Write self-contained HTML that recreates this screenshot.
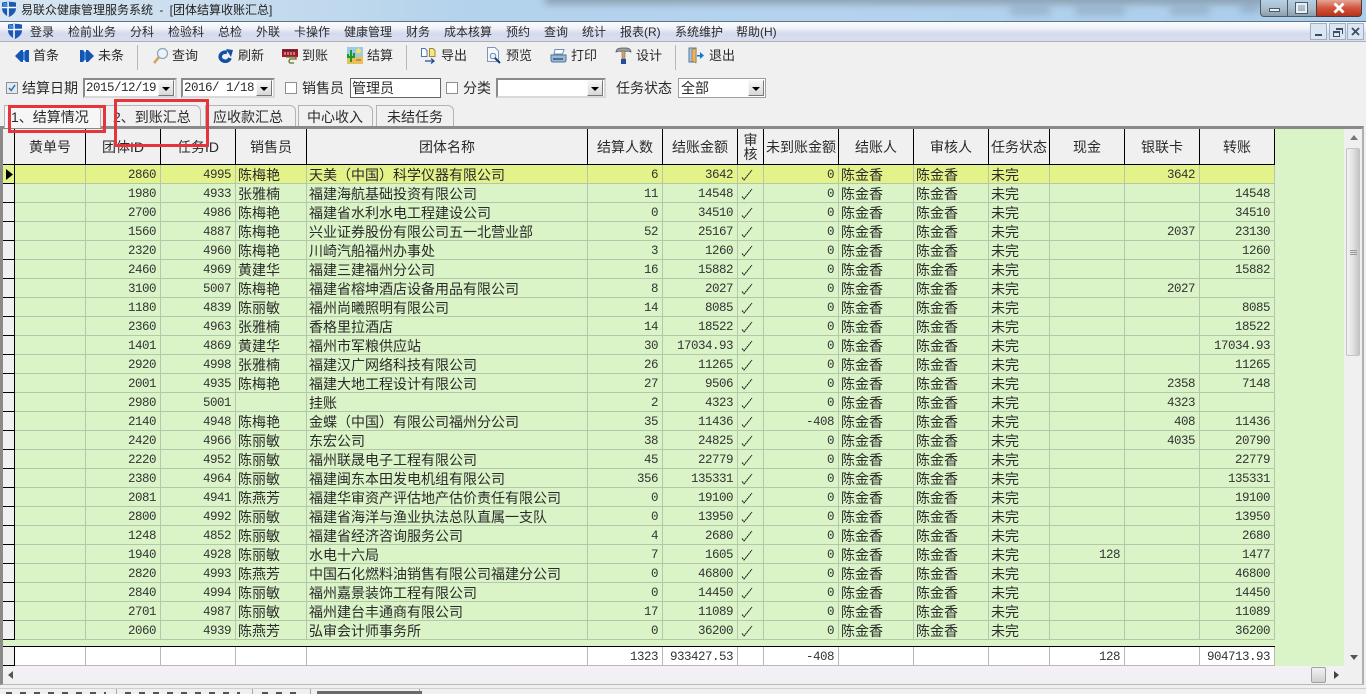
<!DOCTYPE html>
<html lang="zh">
<head>
<meta charset="utf-8">
<title>易联众健康管理服务系统</title>
<style>
html,body{margin:0;padding:0;width:1366px;height:694px;overflow:hidden;background:#f0f0f0}
body{position:relative;font-family:"Liberation Sans","WenQuanYi Zen Hei","Noto Sans CJK SC",sans-serif;font-size:14px;color:#2a2a2a}
.a,.t,svg.i{position:absolute;display:block}
.t{white-space:nowrap;line-height:16px}
.m{font-size:12px;top:24px;color:#2a2a2a}
.b{font-size:13px;top:48px;color:#2a2a2a}
.f{top:80px;font-size:14px;color:#2a2a2a}
.mono{font-family:"Liberation Mono","WenQuanYi Zen Hei",monospace;font-size:12.5px;letter-spacing:-.5px}
.combo{position:absolute;top:78px;height:20px;box-sizing:border-box;background:#fff;border:2px solid #8a8a8a;border-right-color:#d8d8d8;border-bottom-color:#d8d8d8;line-height:16px;padding-left:1px;white-space:nowrap}
.combo i{position:absolute;right:1px;top:0;width:16px;height:16px;box-sizing:border-box;background:linear-gradient(#f6f6f6,#d8d8d8);border:1px solid #f8f8f8;border-right-color:#777;border-bottom-color:#777}
.combo i:after{content:"";position:absolute;left:3px;top:6px;border:4px solid transparent;border-top:4px solid #000;border-bottom:0}
.cb{position:absolute;top:82px;width:12px;height:12px;box-sizing:border-box;background:#fff;border:1px solid #8e8f8f}
.tab{position:absolute;top:105px;height:22px;box-sizing:border-box;background:#f0f0f0;border:1px solid #b4b4b4;border-bottom:0;border-top-right-radius:6px;line-height:23px;white-space:nowrap;color:#2a2a2a}
table{position:absolute;left:3px;border-collapse:separate;border-spacing:0;table-layout:fixed;width:1272px}
td,th{box-sizing:border-box;padding:0;overflow:hidden;white-space:nowrap;font-weight:normal}
#h th{height:36px;background:#f0f0f0;border-right:1px solid #000;border-bottom:1px solid #000;border-left:0;line-height:14px;color:#2a2a2a}
#d td{height:19px;line-height:16px;border-right:1px solid #b4c6ac;border-bottom:1px solid #b4c6ac;background:#daf4c8;padding:2px 0 0 2px;color:#2a2a2a}
#d tr:first-child td{background:#e4f28a}
#d td:first-child,#f td:first-child,#h th:first-child{background:#f0f0f0;border-right:1px solid #000;border-bottom:1px solid #000;padding:0}
#d td.n,#f td.n{font-family:"Liberation Mono",monospace;font-size:12.5px;letter-spacing:-.5px;text-align:right;padding:2px 4px 0 0;color:#333}
#f td{height:19px;line-height:16px;background:#fff;border-right:1px solid #b8b8b8;border-bottom:1px solid #b8b8b8}
#d svg{display:block;margin:0 0 0 1px}
</style>
</head>
<body>
<svg width="0" height="0" style="position:absolute"><defs>
<g id="k"><path d="M1 9.500L3 12L11 2" fill="none" stroke="#111" stroke-width="1" stroke-dasharray="2 .5"/></g>
<g id="sh"><path d="M1 1.500Q8 0 15 1.500V8Q14.500 13 8 16Q1.500 13 1 8Z" fill="#1c58b4"/><path d="M7 1V15.500M1 6.500H15" stroke="#fff" stroke-width="1.600"/><path d="M2 2H6.500V6H2Z" fill="#3a86d8"/></g>
</defs></svg>

<!-- title bar -->
<div class="a" style="left:0;top:0;width:1366px;height:21px;overflow:hidden;background:linear-gradient(90deg,#d9e6f1 0,#c7dced 18%,#b3d2ec 35%,#b5d3ed 60%,#abcdeb 100%)">
 <div class="a" style="left:545px;top:-6px;width:720px;height:10px;background:#7d8c99;filter:blur(4px);opacity:.75"></div>
 <div class="a" style="left:1010px;top:6px;width:40px;height:9px;background:#7f97ad;filter:blur(4px);opacity:.5"></div>
 <div class="a" style="left:1075px;top:6px;width:50px;height:9px;background:#7f97ad;filter:blur(4px);opacity:.5"></div>
 <div class="a" style="left:1170px;top:6px;width:40px;height:9px;background:#7f97ad;filter:blur(4px);opacity:.5"></div>
 <div class="a" style="left:1240px;top:4px;width:20px;height:9px;background:#7f97ad;filter:blur(4px);opacity:.5"></div>
</div>
<svg class="i" style="left:1px;top:1px" width="16" height="17" viewBox="0 0 16 17"><use href="#sh"/></svg>
<div class="t" style="left:21px;top:2px;font-size:12px;color:#222;word-spacing:3px">易联众健康管理服务系统 - [团体结算收账汇总]</div>
<!-- window buttons -->
<div class="a" style="left:1260px;top:0;width:28px;height:17px;box-sizing:border-box;background:linear-gradient(#b6d0e6,#a8bccb 55%,#8c9dab);border:1px solid #4a5a68;border-top:0;border-radius:0 0 0 4px"></div>
<div class="a" style="left:1269px;top:8px;width:11px;height:4px;box-sizing:border-box;background:#e8eef2;border:1px solid #4a5a68"></div>
<div class="a" style="left:1288px;top:0;width:28px;height:17px;box-sizing:border-box;background:linear-gradient(#b6d0e6,#a8bccb 55%,#8c9dab);border-bottom:1px solid #4a5a68"></div>
<div class="a" style="left:1296px;top:3px;width:11px;height:10px;box-sizing:border-box;border:2px solid #e8eef2;outline:1px solid #4a5a68"></div>
<div class="a" style="left:1316px;top:0;width:46px;height:17px;box-sizing:border-box;background:linear-gradient(#e2a596,#d2553c 50%,#b8321c);border:1px solid #4a3a3a;border-top:0;border-radius:0 0 4px 0"></div>
<svg class="i" style="left:1333px;top:2px" width="12" height="12" viewBox="0 0 12 12"><path d="M1.500 1.500L10.500 10.500M10.500 1.500L1.500 10.500" stroke="#fff" stroke-width="2.800"/></svg>

<!-- menu -->
<div class="a" style="left:0;top:21px;width:1366px;height:1px;background:#5d7488"></div>
<div class="a" style="left:0;top:22px;width:1366px;height:19px;background:linear-gradient(#fbfbfd,#f2f4fa 30%,#d5daee 60%,#d9ddf0)"></div>
<div class="a" style="left:0;top:41px;width:1366px;height:1px;background:#b0b0b0"></div>
<svg class="i" style="left:7px;top:23px" width="16" height="17" viewBox="0 0 16 17"><use href="#sh"/></svg>
<div class="t m" style="left:30px">登录</div>
<div class="t m" style="left:68px">检前业务</div>
<div class="t m" style="left:130px">分科</div>
<div class="t m" style="left:168px">检验科</div>
<div class="t m" style="left:218px">总检</div>
<div class="t m" style="left:256px">外联</div>
<div class="t m" style="left:294px">卡操作</div>
<div class="t m" style="left:344px">健康管理</div>
<div class="t m" style="left:406px">财务</div>
<div class="t m" style="left:444px">成本核算</div>
<div class="t m" style="left:506px">预约</div>
<div class="t m" style="left:544px">查询</div>
<div class="t m" style="left:582px">统计</div>
<div class="t m" style="left:620px">报表(R)</div>
<div class="t m" style="left:675px">系统维护</div>
<div class="t m" style="left:736px">帮助(H)</div>
<div class="a" style="left:1310px;top:23px;width:17px;height:17px;box-sizing:border-box;background:#dbe6f3;border:1px solid #9fb0c4"></div>
<div class="a" style="left:1315px;top:34px;width:7px;height:2px;background:#3d4c60"></div>
<div class="a" style="left:1329px;top:23px;width:17px;height:17px;box-sizing:border-box;background:#dbe6f3;border:1px solid #9fb0c4"></div>
<div class="a" style="left:1333px;top:31px;width:7px;height:6px;box-sizing:border-box;border:1px solid #3d4c60;border-top-width:2px"></div>
<div class="a" style="left:1336px;top:28px;width:7px;height:6px;box-sizing:border-box;border:1px solid #3d4c60;border-top-width:2px;border-left:0;border-bottom:0"></div>
<div class="a" style="left:1347px;top:23px;width:17px;height:17px;box-sizing:border-box;background:#dbe6f3;border:1px solid #9fb0c4"></div>
<svg class="i" style="left:1351px;top:27px" width="9" height="9" viewBox="0 0 9 9"><path d="M1 1L8 8M8 1L1 8" stroke="#3d4c60" stroke-width="1.800"/></svg>

<!-- toolbar -->
<svg class="i" style="left:14px;top:49px" width="16" height="14" viewBox="0 0 16 14"><path d="M1 7L7 1H9V13H7ZM7 7L12 1H15V13H12Z" fill="#1656b0"/><path d="M9 3H11V11H9Z" fill="#2e8ae0"/></svg>
<div class="t b" style="left:33px">首条</div>
<svg class="i" style="left:79px;top:49px" width="16" height="14" viewBox="0 0 16 14"><path d="M15 7L9 1H7V13H9ZM9 7L4 1H1V13H4Z" fill="#1656b0"/><path d="M5 3H7V11H5Z" fill="#2e8ae0"/></svg>
<div class="t b" style="left:98px">未条</div>
<div class="a" style="left:137px;top:45px;width:1px;height:25px;background:#b8b8b8"></div>
<svg class="i" style="left:152px;top:47px" width="17" height="18" viewBox="0 0 17 18"><path d="M7 10L2 16" stroke="#d8a25a" stroke-width="2.600"/><circle cx="10.500" cy="6.500" r="5" fill="#eaf3fa" stroke="#8ba6bc" stroke-width="1.300"/></svg>
<div class="t b" style="left:172px">查询</div>
<svg class="i" style="left:218px;top:49px" width="15" height="14" viewBox="0 0 15 14"><path d="M12 9A5 4.500 0 1 1 9 3.500" fill="none" stroke="#1450a4" stroke-width="3.600"/><path d="M8 0L15 1L13 8Z" fill="#1450a4"/></svg>
<div class="t b" style="left:238px">刷新</div>
<svg class="i" style="left:282px;top:48px" width="17" height="16" viewBox="0 0 17 16"><rect x="0" y="1" width="16" height="8" fill="#a51628"/><rect x="1" y="2" width="14" height="1" fill="#333"/><path d="M3 4V7M6 4V7M9 4V7M12 4V7" stroke="#f3d4d4"/><path d="M4 9H14V11H8Q6 14 8 15H12" fill="none" stroke="#6a6a20" stroke-width="1.300"/></svg>
<div class="t b" style="left:302px">到账</div>
<svg class="i" style="left:347px;top:47px" width="16" height="17" viewBox="0 0 16 17"><rect x="0" y="0" width="16" height="17" fill="#9ccbe8"/><path d="M0 11L16 9V17H0Z" fill="#e6c05a"/><circle cx="11.500" cy="4" r="2.500" fill="#f4e25a"/><path d="M4 3V15M1 7V10H7V6" fill="none" stroke="#1f9a2a" stroke-width="2"/><path d="M9 13H14" stroke="#b0562a"/></svg>
<div class="t b" style="left:367px">结算</div>
<div class="a" style="left:406px;top:45px;width:1px;height:25px;background:#b8b8b8"></div>
<svg class="i" style="left:420px;top:47px" width="17" height="17" viewBox="0 0 17 17"><path d="M1.500 1.500H5L7 3.500V9.500H1.500Z" fill="#fff" stroke="#4a78b0"/><path d="M9.500 1.500H13L15 3.500V9.500H9.500Z" fill="#f7e58a" stroke="#a08a30"/><path d="M5 14H14M11 11.500L14 14L11 16.500" fill="none" stroke="#1b4f9c" stroke-width="1.300"/></svg>
<div class="t b" style="left:441px">导出</div>
<svg class="i" style="left:486px;top:47px" width="16" height="17" viewBox="0 0 16 17"><path d="M1.500 .5H9L12.500 4V14.500H1.500Z" fill="#f6f9fc" stroke="#7c97b6"/><circle cx="7" cy="9" r="2.800" fill="#e4f0f8" stroke="#6b8aa8"/><path d="M9 11L14 16" stroke="#123e80" stroke-width="2"/></svg>
<div class="t b" style="left:506px">预览</div>
<svg class="i" style="left:550px;top:48px" width="17" height="16" viewBox="0 0 17 16"><path d="M5 1.500H14L12.500 6H4Z" fill="#fff" stroke="#6f8fb2"/><path d="M1 7H16V12Q16 14 14 14H3Q1 14 1 12Z" fill="#9cbad8" stroke="#4f74a0"/><path d="M3 11H13" stroke="#35587f" stroke-width="1.500"/></svg>
<div class="t b" style="left:571px">打印</div>
<svg class="i" style="left:615px;top:46px" width="17" height="19" viewBox="0 0 17 19"><path d="M1 6Q1 2 7 2H12Q16 3 16 6Q13 4.500 10 5.500H7Q4 4.500 1 6Z" fill="#9aa0a4" stroke="#555" stroke-width=".7"/><rect x="7" y="5" width="3" height="8" fill="#c9a66b" stroke="#7a6136" stroke-width=".5"/><rect x="6" y="13" width="5" height="5" fill="#1d4f9c"/></svg>
<div class="t b" style="left:636px">设计</div>
<div class="a" style="left:675px;top:45px;width:1px;height:25px;background:#b8b8b8"></div>
<svg class="i" style="left:688px;top:47px" width="16" height="17" viewBox="0 0 16 17"><path d="M1 1H8V15H1Z" fill="#a9c3de" stroke="#58789c"/><path d="M4 2.500L8 1V16L4 14Z" fill="#e6b560" stroke="#8a6b2e" stroke-width=".6"/><path d="M9 8H12V5L16 8.500L12 12V9.500H9Z" fill="#0e7bd0"/></svg>
<div class="t b" style="left:709px">退出</div>

<!-- filter row -->
<div class="cb" style="left:6px"></div>
<svg class="i" style="left:7px;top:83px" width="10" height="10" viewBox="0 0 10 10"><rect width="10" height="10" fill="#dfeaf6"/><path d="M2 5L4.200 7.500L8 2" fill="none" stroke="#3a6ea5" stroke-width="1.500"/></svg>
<div class="t f" style="left:22px">结算日期</div>
<div class="combo mono" style="left:83px;width:94px">2015/12/19<i></i></div>
<div class="combo mono" style="left:181px;width:94px">2016/ 1/18<i></i></div>
<div class="cb" style="left:285px"></div>
<div class="t f" style="left:302px">销售员</div>
<div class="a" style="left:350px;top:78px;width:91px;height:20px;box-sizing:border-box;background:#fff;border:1px solid #666;line-height:18px;padding-left:1px;color:#2a2a2a">管理员</div>
<div class="cb" style="left:446px"></div>
<div class="t f" style="left:463px">分类</div>
<div class="combo" style="left:496px;width:110px"><i></i></div>
<div class="t f" style="left:616px">任务状态</div>
<div class="combo" style="left:678px;width:88px;border:1px solid #a0a0a0;line-height:18px;padding-left:2px;color:#2a2a2a">全部<i style="top:1px;right:1px"></i></div>

<!-- tabs -->
<div class="tab" style="left:4px;width:97px;padding-left:6px;background:#f6f6f6;height:23px;z-index:1">1、结算情况</div>
<div class="tab" style="left:105px;width:96px;padding-left:7px">2、到账汇总</div>
<div class="tab" style="left:205px;width:91px;padding-left:7px">应收款汇总</div>
<div class="tab" style="left:298px;width:75px;padding-left:8px">中心收入</div>
<div class="tab" style="left:376px;width:78px;padding-left:10px">未结任务</div>

<!-- grid frame -->
<div class="a" style="left:0;top:126px;width:1364px;height:559px;box-sizing:border-box;border:3px solid #a6a6a6;border-top-color:#8a8a8a;border-left-color:#8a8a8a;border-right:2px solid #b0b0b0;border-bottom:1px solid #b8b8b8;background:#f0f0f0"></div>
<div class="a" style="left:3px;top:129px;width:1341px;height:537px;background:#daf4c8"></div>

<table id="h" style="top:129px">
<colgroup><col style="width:12px"><col style="width:71px"><col style="width:75px"><col style="width:75px"><col style="width:71px"><col style="width:281px"><col style="width:75px"><col style="width:75px"><col style="width:26px"><col style="width:75px"><col style="width:75px"><col style="width:75px"><col style="width:61px"><col style="width:75px"><col style="width:75px"><col style="width:75px"></colgroup>
<tr><th></th><th>黄单号</th><th>团体ID</th><th>任务ID</th><th>销售员</th><th>团体名称</th><th>结算人数</th><th>结账金额</th><th>审<br>核</th><th>未到账金额</th><th>结账人</th><th>审核人</th><th>任务状态</th><th>现金</th><th>银联卡</th><th>转账</th></tr>
</table>

<table id="d" style="top:165px">
<colgroup><col style="width:12px"><col style="width:71px"><col style="width:75px"><col style="width:75px"><col style="width:71px"><col style="width:281px"><col style="width:75px"><col style="width:75px"><col style="width:26px"><col style="width:75px"><col style="width:75px"><col style="width:75px"><col style="width:61px"><col style="width:75px"><col style="width:75px"><col style="width:75px"></colgroup>
<tr><td></td><td></td><td class="n">2860</td><td class="n">4995</td><td>陈梅艳</td><td>天美（中国）科学仪器有限公司</td><td class="n">6</td><td class="n">3642</td><td><svg width="14" height="14"><use href="#k"/></svg></td><td class="n">0</td><td>陈金香</td><td>陈金香</td><td>未完</td><td></td><td class="n">3642</td><td></td></tr>
<tr><td></td><td></td><td class="n">1980</td><td class="n">4933</td><td>张雅楠</td><td>福建海航基础投资有限公司</td><td class="n">11</td><td class="n">14548</td><td><svg width="14" height="14"><use href="#k"/></svg></td><td class="n">0</td><td>陈金香</td><td>陈金香</td><td>未完</td><td></td><td></td><td class="n">14548</td></tr>
<tr><td></td><td></td><td class="n">2700</td><td class="n">4986</td><td>陈梅艳</td><td>福建省水利水电工程建设公司</td><td class="n">0</td><td class="n">34510</td><td><svg width="14" height="14"><use href="#k"/></svg></td><td class="n">0</td><td>陈金香</td><td>陈金香</td><td>未完</td><td></td><td></td><td class="n">34510</td></tr>
<tr><td></td><td></td><td class="n">1560</td><td class="n">4887</td><td>陈梅艳</td><td>兴业证券股份有限公司五一北营业部</td><td class="n">52</td><td class="n">25167</td><td><svg width="14" height="14"><use href="#k"/></svg></td><td class="n">0</td><td>陈金香</td><td>陈金香</td><td>未完</td><td></td><td class="n">2037</td><td class="n">23130</td></tr>
<tr><td></td><td></td><td class="n">2320</td><td class="n">4960</td><td>陈梅艳</td><td>川崎汽船福州办事处</td><td class="n">3</td><td class="n">1260</td><td><svg width="14" height="14"><use href="#k"/></svg></td><td class="n">0</td><td>陈金香</td><td>陈金香</td><td>未完</td><td></td><td></td><td class="n">1260</td></tr>
<tr><td></td><td></td><td class="n">2460</td><td class="n">4969</td><td>黄建华</td><td>福建三建福州分公司</td><td class="n">16</td><td class="n">15882</td><td><svg width="14" height="14"><use href="#k"/></svg></td><td class="n">0</td><td>陈金香</td><td>陈金香</td><td>未完</td><td></td><td></td><td class="n">15882</td></tr>
<tr><td></td><td></td><td class="n">3100</td><td class="n">5007</td><td>陈梅艳</td><td>福建省榕坤酒店设备用品有限公司</td><td class="n">8</td><td class="n">2027</td><td><svg width="14" height="14"><use href="#k"/></svg></td><td class="n">0</td><td>陈金香</td><td>陈金香</td><td>未完</td><td></td><td class="n">2027</td><td></td></tr>
<tr><td></td><td></td><td class="n">1180</td><td class="n">4839</td><td>陈丽敏</td><td>福州尚曦照明有限公司</td><td class="n">14</td><td class="n">8085</td><td><svg width="14" height="14"><use href="#k"/></svg></td><td class="n">0</td><td>陈金香</td><td>陈金香</td><td>未完</td><td></td><td></td><td class="n">8085</td></tr>
<tr><td></td><td></td><td class="n">2360</td><td class="n">4963</td><td>张雅楠</td><td>香格里拉酒店</td><td class="n">14</td><td class="n">18522</td><td><svg width="14" height="14"><use href="#k"/></svg></td><td class="n">0</td><td>陈金香</td><td>陈金香</td><td>未完</td><td></td><td></td><td class="n">18522</td></tr>
<tr><td></td><td></td><td class="n">1401</td><td class="n">4869</td><td>黄建华</td><td>福州市军粮供应站</td><td class="n">30</td><td class="n">17034.93</td><td><svg width="14" height="14"><use href="#k"/></svg></td><td class="n">0</td><td>陈金香</td><td>陈金香</td><td>未完</td><td></td><td></td><td class="n">17034.93</td></tr>
<tr><td></td><td></td><td class="n">2920</td><td class="n">4998</td><td>张雅楠</td><td>福建汉广网络科技有限公司</td><td class="n">26</td><td class="n">11265</td><td><svg width="14" height="14"><use href="#k"/></svg></td><td class="n">0</td><td>陈金香</td><td>陈金香</td><td>未完</td><td></td><td></td><td class="n">11265</td></tr>
<tr><td></td><td></td><td class="n">2001</td><td class="n">4935</td><td>陈梅艳</td><td>福建大地工程设计有限公司</td><td class="n">27</td><td class="n">9506</td><td><svg width="14" height="14"><use href="#k"/></svg></td><td class="n">0</td><td>陈金香</td><td>陈金香</td><td>未完</td><td></td><td class="n">2358</td><td class="n">7148</td></tr>
<tr><td></td><td></td><td class="n">2980</td><td class="n">5001</td><td></td><td>挂账</td><td class="n">2</td><td class="n">4323</td><td><svg width="14" height="14"><use href="#k"/></svg></td><td class="n">0</td><td>陈金香</td><td>陈金香</td><td>未完</td><td></td><td class="n">4323</td><td></td></tr>
<tr><td></td><td></td><td class="n">2140</td><td class="n">4948</td><td>陈梅艳</td><td>金蝶（中国）有限公司福州分公司</td><td class="n">35</td><td class="n">11436</td><td><svg width="14" height="14"><use href="#k"/></svg></td><td class="n">-408</td><td>陈金香</td><td>陈金香</td><td>未完</td><td></td><td class="n">408</td><td class="n">11436</td></tr>
<tr><td></td><td></td><td class="n">2420</td><td class="n">4966</td><td>陈丽敏</td><td>东宏公司</td><td class="n">38</td><td class="n">24825</td><td><svg width="14" height="14"><use href="#k"/></svg></td><td class="n">0</td><td>陈金香</td><td>陈金香</td><td>未完</td><td></td><td class="n">4035</td><td class="n">20790</td></tr>
<tr><td></td><td></td><td class="n">2220</td><td class="n">4952</td><td>陈丽敏</td><td>福州联晟电子工程有限公司</td><td class="n">45</td><td class="n">22779</td><td><svg width="14" height="14"><use href="#k"/></svg></td><td class="n">0</td><td>陈金香</td><td>陈金香</td><td>未完</td><td></td><td></td><td class="n">22779</td></tr>
<tr><td></td><td></td><td class="n">2380</td><td class="n">4964</td><td>陈丽敏</td><td>福建闽东本田发电机组有限公司</td><td class="n">356</td><td class="n">135331</td><td><svg width="14" height="14"><use href="#k"/></svg></td><td class="n">0</td><td>陈金香</td><td>陈金香</td><td>未完</td><td></td><td></td><td class="n">135331</td></tr>
<tr><td></td><td></td><td class="n">2081</td><td class="n">4941</td><td>陈燕芳</td><td>福建华审资产评估地产估价责任有限公司</td><td class="n">0</td><td class="n">19100</td><td><svg width="14" height="14"><use href="#k"/></svg></td><td class="n">0</td><td>陈金香</td><td>陈金香</td><td>未完</td><td></td><td></td><td class="n">19100</td></tr>
<tr><td></td><td></td><td class="n">2800</td><td class="n">4992</td><td>陈丽敏</td><td>福建省海洋与渔业执法总队直属一支队</td><td class="n">0</td><td class="n">13950</td><td><svg width="14" height="14"><use href="#k"/></svg></td><td class="n">0</td><td>陈金香</td><td>陈金香</td><td>未完</td><td></td><td></td><td class="n">13950</td></tr>
<tr><td></td><td></td><td class="n">1248</td><td class="n">4852</td><td>陈丽敏</td><td>福建省经济咨询服务公司</td><td class="n">4</td><td class="n">2680</td><td><svg width="14" height="14"><use href="#k"/></svg></td><td class="n">0</td><td>陈金香</td><td>陈金香</td><td>未完</td><td></td><td></td><td class="n">2680</td></tr>
<tr><td></td><td></td><td class="n">1940</td><td class="n">4928</td><td>陈丽敏</td><td>水电十六局</td><td class="n">7</td><td class="n">1605</td><td><svg width="14" height="14"><use href="#k"/></svg></td><td class="n">0</td><td>陈金香</td><td>陈金香</td><td>未完</td><td class="n">128</td><td></td><td class="n">1477</td></tr>
<tr><td></td><td></td><td class="n">2820</td><td class="n">4993</td><td>陈燕芳</td><td>中国石化燃料油销售有限公司福建分公司</td><td class="n">0</td><td class="n">46800</td><td><svg width="14" height="14"><use href="#k"/></svg></td><td class="n">0</td><td>陈金香</td><td>陈金香</td><td>未完</td><td></td><td></td><td class="n">46800</td></tr>
<tr><td></td><td></td><td class="n">2840</td><td class="n">4994</td><td>陈丽敏</td><td>福州嘉景装饰工程有限公司</td><td class="n">0</td><td class="n">14450</td><td><svg width="14" height="14"><use href="#k"/></svg></td><td class="n">0</td><td>陈金香</td><td>陈金香</td><td>未完</td><td></td><td></td><td class="n">14450</td></tr>
<tr><td></td><td></td><td class="n">2701</td><td class="n">4987</td><td>陈丽敏</td><td>福州建台丰通商有限公司</td><td class="n">17</td><td class="n">11089</td><td><svg width="14" height="14"><use href="#k"/></svg></td><td class="n">0</td><td>陈金香</td><td>陈金香</td><td>未完</td><td></td><td></td><td class="n">11089</td></tr>
<tr><td></td><td></td><td class="n">2060</td><td class="n">4939</td><td>陈燕芳</td><td>弘审会计师事务所</td><td class="n">0</td><td class="n">36200</td><td><svg width="14" height="14"><use href="#k"/></svg></td><td class="n">0</td><td>陈金香</td><td>陈金香</td><td>未完</td><td></td><td></td><td class="n">36200</td></tr>
</table>
<svg class="i" style="left:6px;top:169px" width="7" height="11" viewBox="0 0 7 11"><path d="M0 0L7 5.500L0 11Z" fill="#000"/></svg>

<!-- footer row -->
<div class="a" style="left:3px;top:646px;width:1272px;height:1px;background:#000"></div>
<table id="f" style="top:647px">
<colgroup><col style="width:12px"><col style="width:71px"><col style="width:75px"><col style="width:75px"><col style="width:71px"><col style="width:281px"><col style="width:75px"><col style="width:75px"><col style="width:26px"><col style="width:75px"><col style="width:75px"><col style="width:75px"><col style="width:61px"><col style="width:75px"><col style="width:75px"><col style="width:75px"></colgroup>
<tr><td></td><td></td><td></td><td></td><td></td><td></td><td class="n">1323</td><td class="n">933427.53</td><td></td><td class="n">-408</td><td></td><td></td><td></td><td class="n">128</td><td></td><td class="n">904713.93</td></tr>
</table>

<!-- horizontal scrollbar -->
<div class="a" style="left:3px;top:666px;width:1341px;height:18px;background:linear-gradient(#f4f0f6,#f0f0f0)"></div>
<svg class="i" style="left:8px;top:671px" width="5" height="8" viewBox="0 0 5 8"><path d="M5 0L0 4L5 8Z" fill="#555"/></svg>
<div class="a" style="left:1311px;top:667px;width:15px;height:16px;box-sizing:border-box;background:linear-gradient(#f2f2f2,#cfcfcf);border:1px solid #a0a0a0;border-radius:2px"></div>
<svg class="i" style="left:1334px;top:671px" width="5" height="8" viewBox="0 0 5 8"><path d="M0 0L5 4L0 8Z" fill="#444"/></svg>

<!-- vertical scrollbar -->
<div class="a" style="left:1344px;top:129px;width:18px;height:555px;background:#f0f0f0"></div>
<svg class="i" style="left:1350px;top:135px" width="8" height="5" viewBox="0 0 8 5"><path d="M0 5L4 0L8 5Z" fill="#777"/></svg>
<div class="a" style="left:1346px;top:148px;width:14px;height:208px;box-sizing:border-box;background:linear-gradient(90deg,#f2f2f2,#e2e2e2 50%,#c4c4c4);border:1px solid #c4c4c4;border-radius:2px"></div>
<div class="a" style="left:1350px;top:250px;width:7px;height:1px;background:#999;box-shadow:0 2px 0 #999,0 4px 0 #999"></div>
<svg class="i" style="left:1350px;top:655px" width="8" height="5" viewBox="0 0 8 5"><path d="M0 0L4 5L8 0Z" fill="#555"/></svg>

<!-- red annotation rectangles -->
<div class="a" style="left:8px;top:105px;width:98px;height:28px;box-sizing:border-box;border:3px solid #e5343b;z-index:5"></div>
<div class="a" style="left:114px;top:99px;width:95px;height:48px;box-sizing:border-box;border:3px solid #e5343b;z-index:5"></div>

<!-- bottom strip -->
<div class="a" style="left:0;top:688px;width:1366px;height:1px;background:#cfcfcf"></div>
<div class="a" style="left:116px;top:689px;width:1px;height:5px;background:#aaa"></div>
<div class="a" style="left:252px;top:689px;width:1px;height:5px;background:#aaa"></div>
<div class="a" style="left:310px;top:689px;width:1px;height:5px;background:#aaa"></div>
<div class="a" style="left:419px;top:689px;width:1px;height:5px;background:#aaa"></div>
<div class="a" style="left:317px;top:691px;width:105px;height:3px;background:#6a6a6a"></div>
<div class="a" style="left:6px;top:692px;width:100px;height:2px;background:repeating-linear-gradient(90deg,#555 0 6px,transparent 6px 14px)"></div>
<div class="a" style="left:125px;top:692px;width:115px;height:2px;background:repeating-linear-gradient(90deg,#555 0 6px,transparent 6px 14px)"></div>
<div class="a" style="left:262px;top:692px;width:36px;height:2px;background:repeating-linear-gradient(90deg,#555 0 6px,transparent 6px 14px)"></div>
</body>
</html>
